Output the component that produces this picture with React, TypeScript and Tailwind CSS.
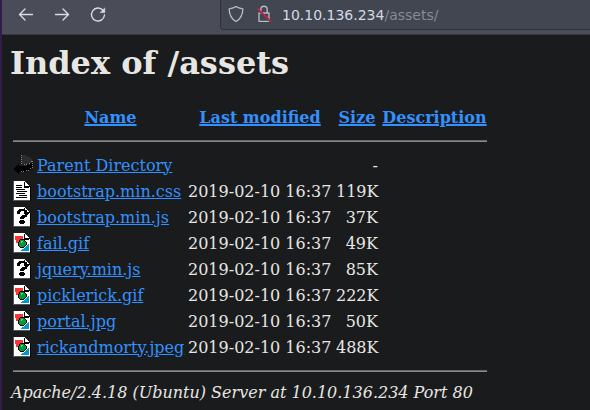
import React from "react";

type Kind = "back" | "text" | "unknown" | "image";

const rows: { kind: Kind; name: string; date: string; size: string }[] = [
  { kind: "back", name: "Parent Directory", date: "", size: "-" },
  { kind: "text", name: "bootstrap.min.css", date: "2019-02-10 16:37", size: "119K" },
  { kind: "unknown", name: "bootstrap.min.js", date: "2019-02-10 16:37", size: "37K" },
  { kind: "image", name: "fail.gif", date: "2019-02-10 16:37", size: "49K" },
  { kind: "unknown", name: "jquery.min.js", date: "2019-02-10 16:37", size: "85K" },
  { kind: "image", name: "picklerick.gif", date: "2019-02-10 16:37", size: "222K" },
  { kind: "image", name: "portal.jpg", date: "2019-02-10 16:37", size: "50K" },
  { kind: "image", name: "rickandmorty.jpeg", date: "2019-02-10 16:37", size: "488K" },
];

function FileIcon({ kind }: { kind: Kind }) {
  if (kind === "back") {
    return (
      <svg width="20" height="22" viewBox="0 0 20 22" className="block" shapeRendering="crispEdges">
        <path d="M9 1h3l4 2 3 3v2l-5 2H9z" fill="#2c2c2c" />
        <path d="M0 15l6-6v3h6l4-1 4-4v7l-3 2-5 2H6v3z" fill="#000" />
        <path d="M8.500 1v9" stroke="#888" strokeDasharray="1 1" />
        <path d="M11 10.500h4M16 9.500h2M18 7.500h1M19.500 7v7M17 14.500h2M13 16.500h4M8 17.500h4" stroke="#888" strokeDasharray="1 1" />
      </svg>
    );
  }
  return (
    <svg width="20" height="22" viewBox="0 0 20 22" className="block" shapeRendering="crispEdges">
      <path d="M2 2h10l6 6v13H2z" fill="#000" />
      <path d="M1 1h11v6h5v13H1z" fill="#fff" />
      <path d="M11 2h1v5h4v1h-5z" fill="#000" />
      <path d="M12 2h1v1h1v1h1v1h1v1h-4z" fill="#fff" />
      <path d="M0.500 1v19.500H17" fill="none" stroke="#555" />
      {kind === "text" && (
        <path d="M3 5.500h6M3 7.500h6M3 9.500h9M4 11.500h10M3 13.500h9M6 15.500h8M3 17.500h11" stroke="#000" />
      )}
      {kind === "unknown" && (
        <path d="M6 3h6v1h2v2h1v3h-1v2h-2v1h-1v1H7v-2h1v-1h1v-1h2V9h1V6h-1V5H8v1H7v2H4V5h1V4h1zM7 14h4v1h1v2h-1v1H7v-1H6v-2h1z" fill="#000" />
      )}
      {kind === "image" && (
        <>
          <path d="M2 4h8v6H8v1H3V8H2z" fill="#f33" />
          <path d="M16 12v7H8v-1h1v-1h2v-1h1v-1h1v-1h1v-1h1v-1z" fill="#09c" />
          <path d="M7 7h4v1h1v1h1v1h1v3h-1v1h-1v1h-1v1H7v-1H6v-1H5v-4h1V8h1z" fill="#000" />
          <path d="M7 8h4v1h1v1h1v3h-1v1h-1v1H7v-1H6v-4h1z" fill="#093" />
          <path d="M8 9h2v1H9v1H8z" fill="#6c9" />
        </>
      )}
    </svg>
  );
}

function Toolbar() {
  return (
    <header className="flex h-[35px] items-start border-b border-[#343841] bg-[#4a4d58] font-['DejaVu_Sans',sans-serif] text-sm">
      <svg width="90" height="30" viewBox="0 0 90 30" className="ml-4 shrink-0" fill="none" stroke="#d5dbe7" strokeWidth="1.350" strokeLinecap="round" strokeLinejoin="round">
        <path d="M14.500 14.500H1.500M7 9l-5.500 5.500L7 20" />
        <path d="M37.500 14.500h13M45 9l5.500 5.500L45 20" />
        <path d="M85 10.300a6.500 6.500 0 1 0 1.500 4.700" />
        <path d="M86.800 8.300v4.300h-4.300z" fill="#d5dbe7" strokeWidth="0.600" />
      </svg>
      <div className="ml-[112px] flex h-[30px] flex-1 items-center rounded-bl border-b border-l border-[#2e323c] bg-[#424650]">
        <svg width="61" height="29" viewBox="0 0 61 29" className="shrink-0" fill="none" stroke="#b5bbc7" strokeWidth="1.350" strokeLinejoin="round">
          <path d="M15 6.500c2 1.500 4.500 2 6.800 2.300 0 6-1.800 10-6.800 12.700-5-2.700-6.800-6.700-6.800-12.700C10.500 8.500 13 8 15 6.500z" />
          <path d="M38 13h10v8.300H38zM39.800 13V9.500a3.200 3.200 0 0 1 6.400 0V13" />
          <path d="M37 9.500l13 12.500" stroke="#424650" strokeWidth="2" />
          <path d="M36.500 8.500l13.500 13" stroke="#e5194d" strokeWidth="1.400" />
        </svg>
        <span className="whitespace-nowrap leading-[28px] text-[#d3d9e5]">10.10.136.234<span className="text-[#858b97]">/assets/</span></span>
      </div>
    </header>
  );
}

const link = "text-[#3391ff] underline";
const headLink = "text-[#3391ff] underline decoration-2";

export default function App() {
  return (
    <div className="h-[410px] w-[590px] overflow-hidden border-l-2 border-[#321d49] bg-[#191b1c] font-['DejaVu_Serif',serif] text-base text-[#e8e6e3]">
      <Toolbar />
      <main className="px-2 pt-[9px]">
        <h1 className="mb-[21px] h-[38px] text-[32px] font-bold leading-[38px]">Index of /assets</h1>
        <table className="w-[480px] table-fixed border-separate border-spacing-[2px] whitespace-nowrap leading-[19px]">
          <colgroup>
            <col className="w-[22px]" />
            <col className="w-[149px]" />
            <col className="w-[146px]" />
            <col className="w-[44px]" />
            <col className="w-[107px]" />
          </colgroup>
          <thead>
            <tr className="h-6">
              <th className="p-px" />
              <th className="p-px"><a className={headLink}>Name</a></th>
              <th className="p-px"><a className={headLink}>Last modified</a></th>
              <th className="p-px"><a className={headLink}>Size</a></th>
              <th className="p-px"><a className={headLink}>Description</a></th>
            </tr>
          </thead>
          <tbody>
            <tr>
              <td colSpan={5} className="p-px"><hr className="my-2 h-[2px] border-0 border-t border-[#666] bg-[#888]" /></td>
            </tr>
            {rows.map((r) => (
              <tr key={r.name} className="h-6">
                <td className="p-px"><FileIcon kind={r.kind} /></td>
                <td className="p-px"><a className={link}>{r.name}</a></td>
                <td className="p-px">{r.date}</td>
                <td className="p-px text-right">{r.size}</td>
                <td className="p-px" />
              </tr>
            ))}
            <tr>
              <td colSpan={5} className="p-px"><hr className="my-2 h-[2px] border-0 border-t border-[#666] bg-[#888]" /></td>
            </tr>
          </tbody>
        </table>
        <address className="pl-px italic leading-[19px]">Apache/2.4.18 (Ubuntu) Server at 10.10.136.234 Port 80</address>
      </main>
    </div>
  );
}
